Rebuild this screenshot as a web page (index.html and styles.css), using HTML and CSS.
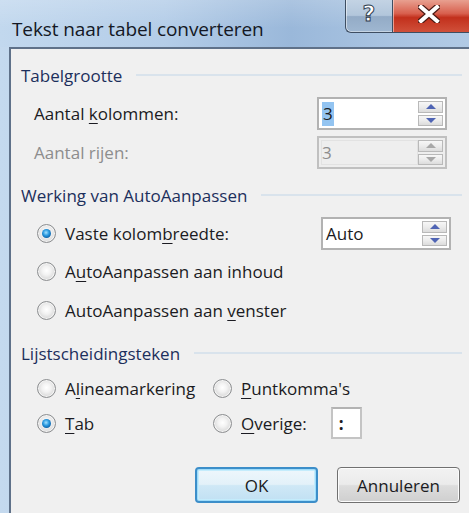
FILE: index.html
```html
<!DOCTYPE html>
<html lang="nl">
<head>
<meta charset="utf-8">
<title>Tekst naar tabel converteren</title>
<link rel="stylesheet" href="styles.css">
</head>
<body>
<div class="window">
  <div class="titlebar">
    <span class="title">Tekst naar tabel converteren</span>
    <div class="caption-buttons">
      <div class="cap-btn help"><span class="help-glyph">?</span></div>
      <div class="cap-btn close">
        <svg width="22" height="18" viewBox="0 0 22 18" aria-hidden="true">
          <path d="M3 2 L19 16 M19 2 L3 16" stroke="#4a1a14" stroke-width="6.4" stroke-linecap="square"/>
          <path d="M3 2 L19 16 M19 2 L3 16" stroke="#ffffff" stroke-width="4" stroke-linecap="square"/>
        </svg>
      </div>
    </div>
  </div>

  <div class="client">
    <div class="group-head"><span>Tabelgrootte</span><i class="rule"></i></div>

    <div class="row field-row r1">
      <span class="field-label">Aantal <u>k</u>olommen:</span>
      <div class="spin">
        <span class="spin-value"><span class="selected">3</span></span>
        <div class="spin-btns"><span class="spin-btn up"></span><span class="spin-btn down"></span></div>
      </div>
    </div>

    <div class="row field-row r2 disabled">
      <span class="field-label">Aantal rijen:</span>
      <div class="spin">
        <span class="spin-value">3</span>
        <div class="spin-btns"><span class="spin-btn up"></span><span class="spin-btn down"></span></div>
      </div>
    </div>

    <div class="group-head h2"><span>Werking van AutoAanpassen</span><i class="rule"></i></div>

    <div class="row radio-row r3">
      <span class="option"><span class="radio checked"></span><span class="option-label">Vaste kolom<u>b</u>reedte:</span></span>
      <div class="spin">
        <span class="spin-value">Auto</span>
        <div class="spin-btns"><span class="spin-btn up"></span><span class="spin-btn down"></span></div>
      </div>
    </div>

    <div class="row radio-row r4">
      <span class="option"><span class="radio"></span><span class="option-label">A<u>u</u>toAanpassen aan inhoud</span></span>
    </div>

    <div class="row radio-row r5">
      <span class="option"><span class="radio"></span><span class="option-label">AutoAanpassen aan <u>v</u>enster</span></span>
    </div>

    <div class="group-head h3"><span>Lijstscheidingsteken</span><i class="rule"></i></div>

    <div class="row radio-row r6">
      <span class="option col1"><span class="radio"></span><span class="option-label">A<u>l</u>ineamarkering</span></span>
      <span class="option"><span class="radio"></span><span class="option-label"><u>P</u>untkomma's</span></span>
    </div>

    <div class="row radio-row r7">
      <span class="option col1"><span class="radio checked"></span><span class="option-label"><u>T</u>ab</span></span>
      <span class="option"><span class="radio"></span><span class="option-label"><u>O</u>verige:</span></span>
      <span class="textbox">:</span>
    </div>

    <div class="buttons">
      <button class="btn default" type="button">OK</button>
      <button class="btn" type="button">Annuleren</button>
    </div>
  </div>
</div>
</body>
</html>
```

FILE: styles.css
```css
* { box-sizing: border-box; }

html, body {
  margin: 0;
  padding: 0;
  width: 469px;
  height: 513px;
  overflow: hidden;
}

body {
  font-family: "Open Sans", "Noto Sans", "DejaVu Sans", sans-serif;
  font-size: 17px;
  color: #1b1b22;
}

.window {
  width: 469px;
  height: 513px;
  display: flex;
  flex-direction: column;
  background: linear-gradient(90deg, #c4d9ee 0%, #b6cee8 40%, #9dbbdc 70%, #a9c4e2 100%);
}

/* caption bar */
.titlebar {
  height: 47px;
  display: flex;
  align-items: flex-start;
  background:
    linear-gradient(180deg, rgba(255,255,255,0.18) 0%, rgba(255,255,255,0) 60%),
    linear-gradient(90deg, #c2d8ee 0%, #b4cde8 35%, #9ab8da 62%, #a7c2e0 80%, #b1cae5 100%);
}

.title {
  padding-left: 12px;
  margin-top: 16px;
  font-size: 19px;
  line-height: 26px;
  color: #141824;
  letter-spacing: -0.1px;
}

.caption-buttons {
  margin-left: auto;
  display: flex;
  align-items: flex-start;
}

.cap-btn {
  height: 34px;
  margin-top: -1px;
  display: flex;
  align-items: center;
  justify-content: center;
  border: 1px solid #3e4e62;
}

.help {
  width: 47px;
  border-radius: 0 0 0 6px;
  border-right: none;
  background: linear-gradient(180deg, #c3d3e4 0%, #b2c6db 48%, #93abc6 52%, #9fb7d1 100%);
  box-shadow: inset 1px 0 0 rgba(255,255,255,0.5), inset 0 -1px 0 rgba(255,255,255,0.4);
}

.help-glyph {
  font-family: "DejaVu Sans", sans-serif;
  font-weight: bold;
  font-size: 22px;
  line-height: 22px;
  color: #ffffff;
  -webkit-text-stroke: 1px #2d3b4e;
  margin-top: -4px;
}

.close {
  width: 77px;
  border-right: none;
  background: linear-gradient(180deg, #e8a090 0%, #d8604e 42%, #c2301c 55%, #d0503a 100%);
  box-shadow: inset 1px 0 0 rgba(255,220,210,0.6);
}

.close svg { margin-top: -4px; margin-right: 4px; }

/* dialog body */
.client {
  flex: 1;
  margin-left: 9px;
  border-left: 2px solid #5f7189;
  border-top: 2px solid #5f7189;
  background: #f0f0f0;
  padding: 14px 7px 0 10px;
  display: flex;
  flex-direction: column;
}

.group-head {
  height: 24px;
  display: flex;
  align-items: center;
  color: #1c2f5c;
  white-space: nowrap;
}

.group-head .rule {
  flex: 1;
  height: 2px;
  margin-left: 14px;
  background: #d9e3ec;
}

.h2 { margin-top: 14px; }
.h3 { margin-top: 14px; }

.row {
  height: 33px;
  display: flex;
  align-items: center;
  white-space: nowrap;
}

.field-row { padding-left: 13px; }
.radio-row { padding-left: 16px; }

.r1 { margin-top: 10px; }
.r2 { margin-top: 6px; }
.r3 { margin-top: 10px; }
.r4 { margin-top: 4px; height: 34px; }
.r5 { margin-top: 5px; height: 34px; }
.r6 { margin-top: 7px; }
.r7 { margin-top: 2px; height: 32px; }

.field-label { width: 283px; }

.disabled { color: #8d8d8d; }

u {
  text-decoration-thickness: 1px;
  text-underline-offset: 3px;
}

/* spin box */
.spin {
  width: 130px;
  height: 33px;
  border: 2px solid #b2b2b2;
  background: #ffffff;
  display: flex;
  align-items: stretch;
}

.disabled .spin { background: #eeeeee; border-color: #c0c0c0; }

.spin-value {
  flex: 1;
  display: flex;
  align-items: center;
  padding-left: 3px;
  color: #1b1b22;
}

.disabled .spin-value { color: #8d8d8d; box-shadow: inset 0 0 0 1px #e2e2e2; margin: 2px 0 2px 2px; padding-left: 1px; }

.selected {
  background: #93c4f1;
  padding: 1px 1px;
  line-height: 22px;
}

.spin-btns {
  width: 27px;
  padding: 2px 2px 2px 0;
  display: flex;
  flex-direction: column;
  gap: 2px;
}

.spin-btn {
  flex: 1;
  border: 1px solid #b9b9b9;
  background: linear-gradient(180deg, #f7f7f7 0%, #ececec 50%, #dcdcdc 100%);
  display: flex;
  align-items: center;
  justify-content: center;
}

.spin-btn::after {
  content: "";
  width: 0;
  height: 0;
  border-left: 5px solid transparent;
  border-right: 5px solid transparent;
}

.up::after { border-bottom: 5px solid #4f64b4; }
.down::after { border-top: 5px solid #4f64b4; }

.disabled .up::after { border-bottom-color: #a8a8a8; }
.disabled .down::after { border-top-color: #a8a8a8; }

/* radio options */
.option {
  display: flex;
  align-items: center;
}

.radio-row .option:first-child { width: 284px; }
.radio-row .option.col1 { width: 176px; }

.radio {
  width: 19px;
  height: 19px;
  flex: none;
  border-radius: 50%;
  border: 1px solid #8c8e90;
  background: radial-gradient(circle at 50% 45%, #ffffff 0%, #f2f2f2 35%, #d6d6d6 75%, #c6c6c6 100%);
  box-shadow: inset 0 0 0 1px #f5f5f5;
  margin-right: 9px;
  display: flex;
  align-items: center;
  justify-content: center;
}

.radio.checked::after {
  content: "";
  width: 9px;
  height: 9px;
  border-radius: 50%;
  background: radial-gradient(circle at 45% 40%, #a6e1ff 0%, #2b9be0 40%, #0b5fa6 75%, #153c6a 100%);
}

/* small text box beside Overige */
.textbox {
  width: 31px;
  height: 32px;
  margin-left: 24px;
  background: #ffffff;
  border: 2px solid #c4c4c4;
  border-top-color: #b3b3b3;
  padding-left: 6px;
  display: flex;
  align-items: center;
  font-weight: bold;
}

/* command buttons */
.buttons {
  margin-top: 28px;
  display: flex;
  justify-content: flex-end;
  gap: 19px;
  padding-right: 2px;
}

.btn {
  width: 123px;
  height: 36px;
  font-family: inherit;
  font-size: 17px;
  color: #1b1b22;
  border: 1px solid #707070;
  border-radius: 4px;
  background: linear-gradient(180deg, #f2f2f2 0%, #ebebeb 48%, #dddddd 52%, #cfcfcf 100%);
  box-shadow: inset 0 0 0 1px #fcfcfc;
  padding: 0;
}

.btn.default {
  border: 2px solid #3c8ec9;
  box-shadow: inset 0 0 0 1px #9fdcfa, inset 0 0 0 2px #c4ecfc;
  background: linear-gradient(180deg, #eef7fc 0%, #e3f1f9 48%, #cfe8f6 52%, #c1e0f3 100%);
}
```
